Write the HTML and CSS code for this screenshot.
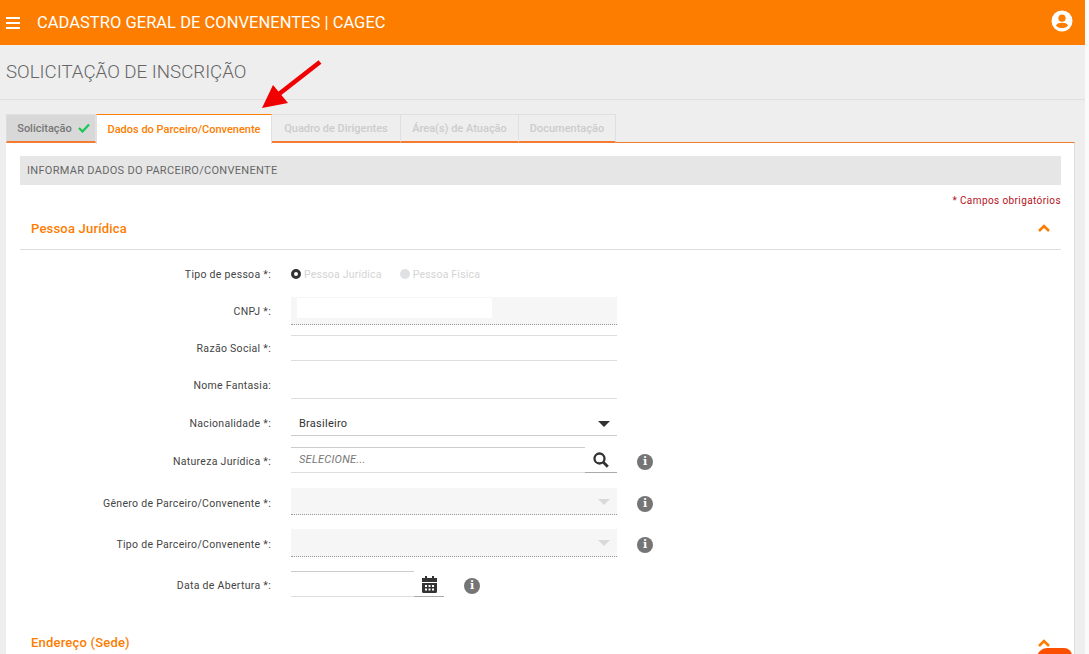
FILE: index.html
```html
<!DOCTYPE html>
<html lang="pt-BR">
<head>
    <meta charset="UTF-8">
    <title>Cadastro Geral de Convenentes</title>
    <link rel="stylesheet" href="styles.css">
</head>
<body>
<div class="page">
    <div class="topbar">
        <svg class="menu-icon" width="14" height="12" viewBox="0 0 14 12"><path d="M0 0h14v2H0zM0 5h14v2H0zM0 10h14v2H0z" fill="#fff"/></svg>
        <span class="topbar-title">CADASTRO GERAL DE CONVENENTES | CAGEC</span>
        <svg class="user-icon" width="22" height="22" viewBox="0 0 22 22">
            <circle cx="11" cy="11" r="10.5" fill="#fff"/>
            <circle cx="11" cy="8.2" r="3.6" fill="#fc7d00"/>
            <path d="M5 15.4c1-2 3.4-2.6 6-2.6s5 .6 6 2.6c-1.500 1.900-3.600 2.700-6 2.700s-4.500-.8-6-2.700z" fill="#fc7d00"/>
        </svg>
    </div>

    <div class="page-title">SOLICITAÇÃO DE INSCRIÇÃO</div>

    <div class="content">
        <ul class="tabs">
            <li class="tab done">Solicitação
                <svg width="12" height="10" viewBox="0 0 12 10"><path d="M1 5l3.500 3.500L11 1.500" fill="none" stroke="#18c653" stroke-width="2.200"/></svg>
            </li>
            <li class="tab active">Dados do Parceiro/Convenente</li>
            <li class="tab off t-quadro">Quadro de Dirigentes</li>
            <li class="tab off t-area">Área(s) de Atuação</li>
            <li class="tab off t-doc">Documentação</li>
        </ul>

        <div class="panel">
            <div class="panel-head">INFORMAR DADOS DO PARCEIRO/CONVENENTE</div>
            <div class="required">* Campos obrigatórios</div>

            <div class="section-head">
                <span>Pessoa Jurídica</span>
                <svg width="12" height="8" viewBox="0 0 12 8"><path d="M1 7l5-5 5 5" fill="none" stroke="#fc7d00" stroke-width="2.600"/></svg>
            </div>

            <div class="form">
                <div class="row r-tipo">
                    <label>Tipo de pessoa *:</label>
                    <div class="radios">
                        <span class="radio checked"></span><span class="radio-text">Pessoa Jurídica</span>
                        <span class="radio"></span><span class="radio-text">Pessoa Física</span>
                    </div>
                </div>
                <div class="row r-cnpj">
                    <label>CNPJ *:</label>
                    <div class="field readonly"><div class="blank"></div></div>
                </div>
                <div class="row r-razao">
                    <label>Razão Social *:</label>
                    <div class="field line top-line"></div>
                </div>
                <div class="row r-nome">
                    <label>Nome Fantasia:</label>
                    <div class="field line"></div>
                </div>
                <div class="row r-nac">
                    <label>Nacionalidade *:</label>
                    <div class="field line dark">
                        <span class="value">Brasileiro</span>
                        <span class="caret"></span>
                    </div>
                </div>
                <div class="row low r-nat">
                    <label>Natureza Jurídica *:</label>
                    <div class="field line lookup">
                        <span class="placeholder">SELECIONE...</span>
                        <span class="addon">
                            <svg width="16" height="16" viewBox="0 0 16 16"><circle cx="6.500" cy="6.500" r="5" fill="none" stroke="#333" stroke-width="2.300"/><path d="M10.300 10.300l4.500 4.500" stroke="#333" stroke-width="2.800"/></svg>
                        </span>
                    </div>
                    <span class="info">i</span>
                </div>
                <div class="row lower r-gen">
                    <label>Gênero de Parceiro/Convenente *:</label>
                    <div class="field readonly select"><span class="caret light"></span></div>
                    <span class="info">i</span>
                </div>
                <div class="row low r-tp">
                    <label>Tipo de Parceiro/Convenente *:</label>
                    <div class="field readonly select"><span class="caret light"></span></div>
                    <span class="info">i</span>
                </div>
                <div class="row low r-data">
                    <label>Data de Abertura *:</label>
                    <div class="field line date">
                        <span class="addon">
                            <svg width="15" height="17" viewBox="0 0 15 17">
                                <path d="M3 0h2v2h5V0h2v2h3v4H0V2h3zM0 7h15v8.500a1.500 1.500 0 0 1-1.500 1.500h-12A1.500 1.500 0 0 1 0 15.500z" fill="#333"/>
                                <path d="M3 9h2v2H3zM6.500 9h2v2h-2zM10 9h2v2h-2zM3 12.500h2v2H3zM6.500 12.500h2v2h-2zM10 12.500h2v2h-2z" fill="#fff"/>
                            </svg>
                        </span>
                    </div>
                    <span class="info">i</span>
                </div>
            </div>

            <div class="section-head second">
                <span>Endereço (Sede)</span>
                <svg width="12" height="8" viewBox="0 0 12 8"><path d="M1 7l5-5 5 5" fill="none" stroke="#fc7d00" stroke-width="2.600"/></svg>
            </div>
        </div>
    </div>

    <!-- seta vermelha por cima das abas -->
    <svg class="arrow" width="62" height="50" viewBox="0 0 62 50">
        <path d="M59 2L18 34" stroke="#f00000" stroke-width="4.500" fill="none"/>
        <path d="M1 48L12 25 27 43z" fill="#f00000"/>
    </svg>
    <div class="float-btn"></div>
</div>
</body>
</html>
```

FILE: styles.css
```css
* {
    padding: 0;
    margin: 0;
    list-style: none;
    box-sizing: border-box;
}

html, body {
    height: 654px;
    overflow: hidden;
    background: #fafafa;
}

body {
    font-family: Roboto, "Liberation Sans", sans-serif;
    color: #444;
}

.page {
    position: relative;
    width: 1085px;
    height: 654px;
    overflow: hidden;
    background: #eee;
}

.topbar {
    display: flex;
    align-items: center;
    height: 45px;
    padding: 0 12px 0 6px;
    background: #fc7d00;
    color: #fff;
}

.menu-icon {
    margin-right: 17px;
}

.topbar-title {
    font-size: 16.500px;
    font-weight: 400;
    letter-spacing: 0.03px;
}

.user-icon {
    margin-left: auto;
    margin-top: -4px;
}

.page-title {
    height: 55px;
    padding: 17px 0 0 6px;
    border-bottom: 1px solid #e0e0e0;
    font-size: 18.700px;
    font-weight: 300;
    line-height: 21px;
    color: #666;
}

.content {
    padding: 14px 10px 0 6px;
}

.tabs {
    display: flex;
    height: 29px;
    font-size: 11px;
    font-weight: 500;
    letter-spacing: 0;
}

.tab {
    display: flex;
    align-items: center;
    justify-content: center;
    gap: 6px;
    height: 29px;
    border: 1px solid #e0e0e0;
    border-bottom: 2px solid #f47b30;
    border-left: 0;
    color: #ccc;
    background: #eee;
}

.tab.done {
    width: 90px;
    padding-left: 5px;
    border-left: 1px solid #ddd;
    background: #d8d8d8;
    color: #777;
}

.tab.active {
    position: relative;
    width: 176px;
    height: 30px;
    border: 1px solid #e0e0e0;
    border-top: 1px solid #fc7d00;
    border-bottom: 0;
    background: #fff;
    color: #fc7d00;
}

.t-quadro { width: 129px; }
.t-area { width: 118px; }
.t-doc { width: 97px; }

.panel {
    height: 560px;
    margin-top: -1px;
    padding: 13px 13px 0 14px;
    border-top: 1px solid #f47b30;
    border-right: 1px solid #ddd;
    background: #fff;
}

.panel-head {
    height: 29px;
    padding-left: 7px;
    background: #e6e6e6;
    font-size: 11px;
    line-height: 30px;
    letter-spacing: 0.3px;
    color: #666;
}

.required {
    margin-top: 10px;
    font-size: 10px;
    line-height: 12px;
    letter-spacing: 0.4px;
    text-align: right;
    color: #b5121b;
}

.section-head {
    display: flex;
    align-items: center;
    justify-content: space-between;
    height: 43px;
    padding: 0 11px 0 11px;
    border-bottom: 1px solid #ddd;
    font-size: 13px;
    font-weight: 500;
    letter-spacing: 0.2px;
    color: #fc7d00;
}

.section-head.second {
    border-bottom: 0;
}

.form {
    display: flex;
    flex-direction: column;
    height: 371px;
}

.row {
    display: flex;
    align-items: center;
}

.row label {
    flex: none;
    width: 251px;
    margin-right: 20px;
    font-size: 10.500px;
    font-weight: 400;
    letter-spacing: 0.3px;
    text-align: right;
    color: #444;
}

.row.low label {
    padding-top: 2px;
}

.row.lower label {
    padding-top: 4px;
}

.r-tipo { height: 20px; margin-top: 14px; }
.r-cnpj { height: 28px; margin-top: 13px; }
.r-razao { height: 26px; margin-top: 10px; }
.r-nome { height: 27px; margin-top: 11px; }
.r-nac { height: 26px; margin-top: 11px; }
.r-nat { height: 26px; margin-top: 11px; }
.r-gen { height: 27px; margin-top: 15px; }
.r-tp { height: 28px; margin-top: 14px; }
.r-data { height: 26px; margin-top: 14px; }

.radios {
    display: flex;
    align-items: center;
    font-size: 10.500px;
    letter-spacing: 0.2px;
    color: #d4d4d4;
}

.radio {
    width: 10px;
    height: 10px;
    margin-right: 3px;
    border-radius: 50%;
    background: #dfe1e5;
}

.radio.checked {
    border: 3px solid #333;
    background: #fff;
}

.radio-text {
    margin-right: 18px;
}

.field {
    position: relative;
    display: flex;
    align-items: center;
    flex: none;
    width: 326px;
    height: 100%;
    font-size: 11px;
    letter-spacing: 0.25px;
}

.field.readonly {
    border-bottom: 1px dotted #999;
    background: #f6f6f6;
}

.field.line {
    border-bottom: 1px solid #ddd;
}

.field.top-line {
    border-top: 1px solid #ddd;
}

.field.dark {
    border-bottom-color: #ccc;
}

.blank {
    width: 195px;
    height: 20px;
    margin: -5px 0 0 6px;
    background: #fff;
}

.value {
    padding: 2px 0 0 8px;
    color: #333;
}

.caret {
    position: absolute;
    right: 7px;
    top: 11px;
    border-left: 6px solid transparent;
    border-right: 6px solid transparent;
    border-top: 6px solid #333;
}

.caret.light {
    border-top-color: #d9d9d9;
}

.lookup {
    border-top: 0;
    padding-left: 8px;
}

.lookup::before {
    content: "";
    position: absolute;
    left: 0;
    top: 0;
    width: 294px;
    border-top: 1px solid #ccc;
}

.placeholder {
    font-style: italic;
    color: #777;
}

.addon {
    position: absolute;
    right: 0;
    bottom: -1px;
    display: flex;
    align-items: center;
    justify-content: center;
    width: 32px;
    height: 25px;
    border-bottom: 1px solid #aaa;
}

.date {
    width: 153px;
}

.date::before {
    content: "";
    position: absolute;
    left: 0;
    top: 0;
    width: 123px;
    border-top: 1px solid #ccc;
}

.date .addon {
    width: 30px;
}

.info {
    flex: none;
    width: 16px;
    height: 16px;
    margin: 4px 0 0 20px;
    border-radius: 50%;
    background: #757575;
    color: #fff;
    font-family: "DejaVu Serif", serif;
    font-size: 11px;
    font-weight: 700;
    line-height: 16px;
    text-align: center;
}

.arrow {
    position: absolute;
    left: 261px;
    top: 60px;
}

.float-btn {
    position: absolute;
    left: 1037px;
    top: 648px;
    width: 35px;
    height: 30px;
    border-radius: 10px 8px 0 0;
    background: #fc4f00;
}
```
